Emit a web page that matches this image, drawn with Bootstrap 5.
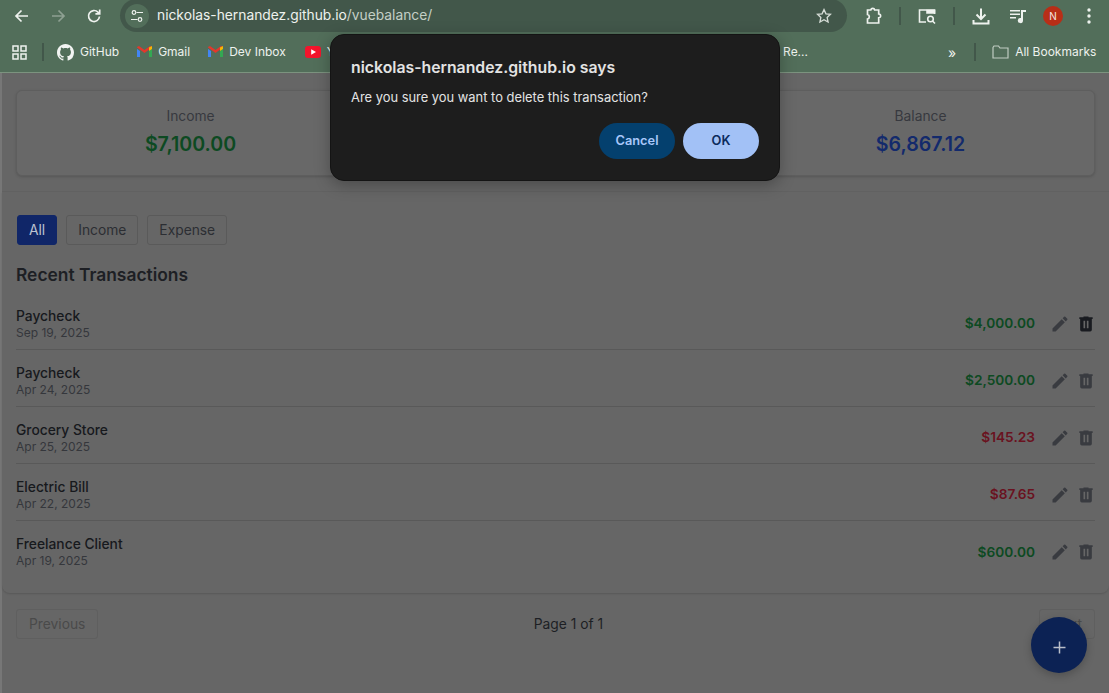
<!DOCTYPE html>
<html lang="en">
<head>
  <meta charset="UTF-8" />
  <meta name="viewport" content="width=device-width, initial-scale=1.0"/>
  <title>VueBalance</title>
  <link href="https://cdn.jsdelivr.net/npm/bootstrap@5.3.0/dist/css/bootstrap.min.css" rel="stylesheet"/>
  <style>
    html, body { height: 100%; }
    body {
      background: #666666;
      font-family: Inter, "Liberation Sans", sans-serif;
      color: #1d1f24;
      overflow: hidden;
      position: relative;
    }
    /* browser chrome */
    .top-bar { height: 32px; background: #526e5a; padding-left: 12px; }
    .tool-ico { width: 20px; height: 20px; flex: none; color: #eef2ee; }
    .url-box {
      width: 727px; height: 33px; margin: -1px 0 0 16px; background: #42574a;
      border-radius: 17px;
      padding: 0 14px 0 5px; color: #eef2ee; font-size: 13.8px;
    }
    .url-tune { width: 24px; height: 24px; border-radius: 50%; background: #526e5a; }
    .url-dim { color: #c4cfc6; }
    .sep-v { width: 2px; height: 18px; background: #42574a; flex: none; }
    .avatar {
      width: 20px; height: 20px; border-radius: 50%; background: #b82e17;
      color: #f4e6e2; font-size: 10px; line-height: 20px; text-align: center;
    }
    .book-bar {
      height: 41px; background: #526e5a; border-bottom: 1px solid #7c937f;
      padding-left: 12px; color: #eef2ee; font-size: 12px;
    }
    .book-item { gap: 6px; white-space: nowrap; }
    /* app */
    .app-wrap { border-left: 2px solid #777777; height: 620px; }
    .sum-section { height: 119px; padding: 17px 14px 0; border-bottom: 1px solid #626262; }
    .sum-card {
      flex: 1 1 0; height: 86px; background: #686868; border: 1px solid #5e5e5e;
      border-radius: 6px; box-shadow: 0 1px 3px rgba(0,0,0,.16); text-align: center; padding-top: 15px;
    }
    .sum-label { font-size: 13.8px; line-height: 20px; color: #37393f; }
    .sum-value { font-size: 19.6px; line-height: 30px; font-weight: 600; margin-top: 3px; }
    .txt-in { color: #0d4a22; }
    .txt-out { color: #6a1220; }
    .txt-bal { color: #132a6c; }
    .list-panel {
      height: 401px; padding: 0 14px; border-radius: 0 0 8px 8px;
      box-shadow: 0 1px 2px rgba(0,0,0,.14);
    }
    .flt-btn {
      height: 30px; padding: 0 11px; font-size: 13.8px; line-height: 28px; color: #2c2e33;
      background: transparent; border: 1px solid #5a5a5a; border-radius: 3px;
    }
    .flt-on { background: #102668; border-color: #102668; color: #bcc2d0; }
    .list-title { font-size: 17.4px; line-height: 24px; font-weight: 600; margin: 18px 0 6px; }
    .tx-row { height: 57px; border-bottom: 1px solid #595959; padding-top: 5px; }
    .tx-row:last-child { border-bottom: 0; }
    .tx-name { font-size: 13.8px; line-height: 18px; font-weight: 500; color: #17191d; }
    .tx-date { font-size: 12px; line-height: 16px; color: #35373c; }
    .tx-amt { font-size: 13.7px; font-weight: 600; }
    .ico-btn { width: 20px; height: 20px; color: #393b40; flex: none; }
    .ico-hover { color: #191b20; }
    .pager { padding: 16px 14px 0; font-size: 13.8px; }
    .pg-btn {
      height: 30px; padding: 0 12px; font-size: 13.8px; line-height: 28px; color: #4a4a4a;
      border: 1px solid #5f5f5f; border-radius: 3px; background: transparent;
    }
    /* overlays */
    .fab-add {
      position: absolute; left: 1031px; top: 617px; width: 56px; height: 56px; border-radius: 50%;
      background: #0c2254; box-shadow: 0 3px 8px rgba(0,0,0,.22); color: #b9bec9; padding-top: 5px;
    }
    .alert-box {
      position: absolute; left: 330px; top: 34px; width: 450px; height: 147px; background: #1d1d1d;
      border: 1px solid #141414; border-radius: 14px; padding: 21px 20px 0;
      box-shadow: 0 4px 16px rgba(0,0,0,.28); color: #e3e3e3;
    }
    .alert-title { font-size: 15.8px; line-height: 24px; font-weight: 600; }
    .alert-msg { font-size: 12.9px; line-height: 18px; margin-top: 9px; }
    .alert-btn {
      height: 36px; border: 0; border-radius: 18px; width: 76px; font-size: 12.8px; font-weight: 600;
      font-family: inherit; padding: 0;
    }
    .alert-cancel { background: #04406e; color: #a8c7fa; }
    .alert-ok { background: #a2c1f6; color: #0b2a5c; }
  </style>
</head>
<body>

  <!-- Browser toolbar -->
  <div class="top-bar d-flex align-items-center">
    <svg class="tool-ico" viewBox="0 0 20 20" fill="none" stroke="currentColor" stroke-width="1.7"><path d="M16 10H4.5M9.5 4.5 4 10l5.500 5.500"/></svg>
    <svg class="tool-ico ms-3" viewBox="0 0 20 20" fill="none" stroke="#8ea092" stroke-width="1.7"><path d="M4 10h11.500M10.500 4.500 16 10l-5.500 5.500"/></svg>
    <svg class="tool-ico ms-3" viewBox="0 0 20 20" fill="none" stroke="currentColor" stroke-width="1.7"><path d="M15.500 10.500a5.500 5.500 0 1 1-1.600-4.400L15.500 7.500"/><path d="M15.700 3.500v4.300h-4.300" /></svg>
    <div class="url-box d-flex align-items-center">
      <span class="url-tune d-flex align-items-center justify-content-center me-2">
        <svg width="14" height="14" viewBox="0 0 14 14" fill="none" stroke="#eef2ee" stroke-width="1.200"><circle cx="4" cy="3.500" r="1.800"/><path d="M6.500 3.500H13M1 10.500h6.500"/><circle cx="10" cy="10.500" r="1.800"/></svg>
      </span>
      <span>nickolas-hernandez.github.io<span class="url-dim">/vuebalance/</span></span>
      <svg class="ms-auto" width="18" height="18" viewBox="0 0 24 24" fill="none" stroke="#d5dcd6" stroke-width="1.800"><path d="m12 3.500 2.600 5.600 6 .7-4.400 4.200 1.200 6L12 17l-5.400 3 1.200-6-4.400-4.200 6-.7z"/></svg>
    </div>
    <svg class="tool-ico" style="margin-left:17px" viewBox="0 0 20 20" fill="none" stroke="currentColor" stroke-width="1.700"><path d="M3.500 4h3.300a2 2 0 0 1 3.900 0h4v4a1.800 1.800 0 0 1 0 3.800V17H3.500v-4a2.300 2.300 0 0 0 0-4.500z"/></svg>
    <span class="sep-v" style="margin-left:15px"></span>
    <svg class="tool-ico" style="margin-left:16px" viewBox="0 0 20 20" fill="none" stroke="currentColor" stroke-width="1.600"><path d="M9 16H2.500V4h15v4"/><path d="M10 4.500h7.500V7H10z" fill="currentColor"/><circle cx="13.500" cy="13" r="2.800"/><path d="m15.500 15 2.500 2.500"/></svg>
    <span class="sep-v" style="margin-left:16px"></span>
    <svg class="tool-ico" style="margin-left:16px" viewBox="0 0 20 20" fill="none" stroke="currentColor" stroke-width="2"><path d="M10 2.500v10M5.500 8.500l4.500 4.500 4.500-4.500M2.500 14v3.500h15V14"/></svg>
    <svg class="tool-ico" style="margin-left:17px" viewBox="0 0 20 20" fill="currentColor"><path d="M2 4h10v1.500H2zM2 7.500h10V9H2zM2 11h6v1.500H2zM13 4h5v2h-3v8.500a2.600 2.600 0 1 1-2-2.500z"/></svg>
    <span class="avatar" style="margin-left:15px">N</span>
    <svg class="tool-ico" style="margin-left:16px" viewBox="0 0 20 20" fill="currentColor"><circle cx="10" cy="4" r="1.700"/><circle cx="10" cy="10" r="1.700"/><circle cx="10" cy="16" r="1.700"/></svg>
  </div>

  <!-- Bookmarks -->
  <div class="book-bar d-flex align-items-center">
    <svg width="15" height="15" viewBox="0 0 15 15" fill="none" stroke="#eef2ee" stroke-width="1.500"><path d="M1 1h5v5H1zM9 1h5v5H9zM1 9h5v5H1zM9 9h5v5H9z"/></svg>
    <span class="sep-v" style="margin-left:15px"></span>
    <span class="book-item d-flex align-items-center" style="margin-left:13px">
      <svg width="17" height="17" viewBox="0 0 16 16" fill="#f2f4f2"><path d="M8 0C3.580 0 0 3.580 0 8c0 3.540 2.290 6.530 5.470 7.590.4.070.55-.17.55-.38 0-.19-.01-.82-.01-1.490-2.010.37-2.530-.49-2.690-.94-.09-.23-.48-.94-.82-1.130-.28-.15-.68-.52-.01-.53.630-.01 1.080.58 1.230.82.720 1.210 1.870.87 2.330.66.070-.52.280-.87.510-1.070-1.780-.2-3.640-.89-3.640-3.950 0-.87.310-1.590.820-2.150-.08-.2-.36-1.020.08-2.120 0 0 .67-.21 2.200.82.640-.18 1.320-.27 2-.27s1.360.09 2 .27c1.530-1.040 2.200-.82 2.200-.82.440 1.100.160 1.920.080 2.120.51.560.82 1.270.82 2.150 0 3.070-1.870 3.750-3.650 3.950.29.250.54.730.54 1.480 0 1.070-.01 1.930-.01 2.200 0 .21.150.46.55.38A8.010 8.010 0 0 0 16 8c0-4.420-3.580-8-8-8z"/></svg>
      GitHub
    </span>
    <span class="book-item d-flex align-items-center" style="margin-left:18px">
      <svg width="15" height="12" viewBox="0 0 15 12"><path d="M0 3v8h3V5z" fill="#4285f4"/><path d="M12 5v6h3V3z" fill="#34a853"/><path d="M0 1.500 7.500 7 15 1.500V1l-2-1-5.500 4L2 0 0 1z" fill="#e2382c"/><path d="M12 1.500 15 0v3l-3 2z" fill="#f6b704"/></svg>
      Gmail
    </span>
    <span class="book-item d-flex align-items-center" style="margin-left:18px">
      <svg width="15" height="12" viewBox="0 0 15 12"><path d="M0 3v8h3V5z" fill="#4285f4"/><path d="M12 5v6h3V3z" fill="#34a853"/><path d="M0 1.500 7.500 7 15 1.500V1l-2-1-5.500 4L2 0 0 1z" fill="#e2382c"/><path d="M12 1.500 15 0v3l-3 2z" fill="#f6b704"/></svg>
      Dev Inbox
    </span>
    <span class="book-item d-flex align-items-center" style="margin-left:19px">
      <svg width="16" height="12" viewBox="0 0 16 12"><rect width="16" height="12" rx="3" fill="#f4142c"/><path d="m6.200 3.200 4.800 2.800-4.800 2.800z" fill="#fff"/></svg>
      YouTube
    </span>
    <span class="book-item" style="margin-left:407px">Re...</span>
    <span class="book-item" style="margin-left:140px;font-size:14px">&raquo;</span>
    <span class="sep-v" style="margin-left:18px"></span>
    <span class="book-item d-flex align-items-center" style="margin-left:16px">
      <svg width="17" height="14" viewBox="0 0 17 14" fill="none" stroke="#c0ccc2" stroke-width="1.200"><path d="M1 2.500 2 1h4.500L8 3h8v10H1z"/></svg>
      All Bookmarks
    </span>
  </div>

  <!-- App -->
  <div class="app-wrap">
    <div class="sum-section d-flex gap-3">
      <div class="sum-card"><div class="sum-label">Income</div><div class="sum-value txt-in">$7,100.00</div></div>
      <div class="sum-card"><div class="sum-label">Expense</div><div class="sum-value txt-out">$232.88</div></div>
      <div class="sum-card"><div class="sum-label">Balance</div><div class="sum-value txt-bal">$6,867.12</div></div>
    </div>

    <div class="list-panel">
      <div class="d-flex" style="gap:9px;padding:23px 0 0 1px">
        <button class="flt-btn flt-on">All</button>
        <button class="flt-btn">Income</button>
        <button class="flt-btn">Expense</button>
      </div>
      <div class="list-title">Recent Transactions</div>

      <div id="txList"></div>
    </div>

    <div class="pager d-flex align-items-center justify-content-between">
      <button class="pg-btn">Previous</button>
      <span style="color:#1d1f24">Page 1 of 1</span>
      <button class="pg-btn">Next</button>
    </div>
  </div>

  <!-- Add button -->
  <div class="fab-add d-flex align-items-center justify-content-center">
    <svg width="13" height="13" viewBox="0 0 13 13" fill="none" stroke="currentColor" stroke-width="1.500"><path d="M6.500 .5v12M.5 6.500h12"/></svg>
  </div>

  <!-- Delete confirm dialog -->
  <div class="alert-box">
    <div class="alert-title">nickolas-hernandez.github.io says</div>
    <div class="alert-msg">Are you sure you want to delete this transaction?</div>
    <div class="d-flex justify-content-end gap-2" style="margin-top:16px">
      <button class="alert-btn alert-cancel">Cancel</button>
      <button class="alert-btn alert-ok">OK</button>
    </div>
  </div>

  <script>
    const transactions = [
      { name: 'Paycheck', date: 'Sep 19, 2025', amount: '$4,000.00', cls: 'txt-in' },
      { name: 'Paycheck', date: 'Apr 24, 2025', amount: '$2,500.00', cls: 'txt-in' },
      { name: 'Grocery Store', date: 'Apr 25, 2025', amount: '$145.23', cls: 'txt-out' },
      { name: 'Electric Bill', date: 'Apr 22, 2025', amount: '$87.65', cls: 'txt-out' },
      { name: 'Freelance Client', date: 'Apr 19, 2025', amount: '$600.00', cls: 'txt-in' }
    ];

    // Build the transaction rows
    document.getElementById('txList').innerHTML = transactions.map((t, i) => `
      <div class="tx-row d-flex align-items-center">
        <div>
          <div class="tx-name">${t.name}</div>
          <div class="tx-date">${t.date}</div>
        </div>
        <div class="tx-amt ms-auto ${t.cls}">${t.amount}</div>
        <svg class="ico-btn" style="margin-left:15px" viewBox="0 0 24 24" fill="currentColor"><path d="M3 17.250V21h3.750L17.810 9.940l-3.750-3.750L3 17.250zM20.710 7.040a1 1 0 0 0 0-1.410l-2.340-2.340a1 1 0 0 0-1.410 0l-1.830 1.830 3.750 3.750 1.830-1.830z"/></svg>
        <svg class="ico-btn ${i === 0 ? 'ico-hover' : ''}" style="margin:0 -1px 0 6px" viewBox="0 0 24 24" fill="currentColor"><path d="M9 3v1H4v2h1v13a2 2 0 0 0 2 2h10a2 2 0 0 0 2-2V6h1V4h-5V3H9zm0 5h2v9H9V8zm4 0h2v9h-2V8z"/></svg>
      </div>
    `).join('');
  </script>
  <script src="https://cdn.jsdelivr.net/npm/bootstrap@5.3.0/dist/js/bootstrap.bundle.min.js"></script>
</body>
</html>
